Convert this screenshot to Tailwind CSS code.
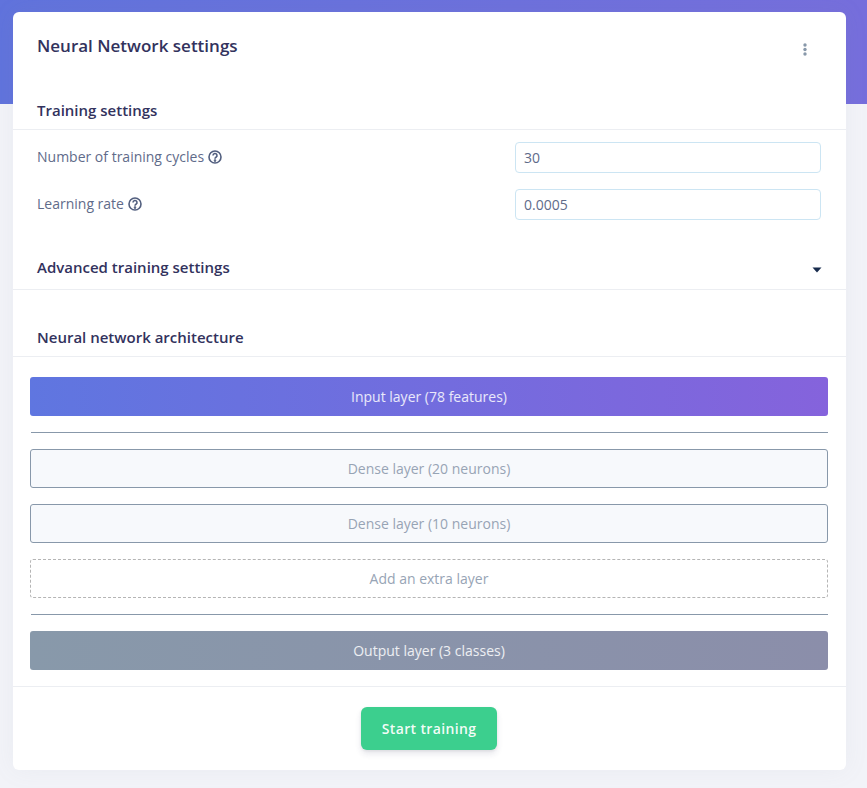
<!DOCTYPE html>
<html>
<head>
<meta charset="utf-8">
<script src="https://cdn.jsdelivr.net/npm/@tailwindcss/browser@4"></script>
</head>
<body class="bg-[#f2f3f8] font-['Open_Sans',sans-serif]">
<div class="relative h-[788px] w-[867px] overflow-hidden">
  <div class="absolute inset-x-0 top-0 h-[104px] bg-[linear-gradient(87deg,#6073dc_0%,#766edc_100%)]"></div>
  <main class="relative mx-[13px] mt-[12px] h-[758px] w-[833px] rounded-md bg-white shadow-[0_0_24px_rgba(136,152,170,0.08)]">
    <header class="flex h-[70px] items-start justify-between pl-[24px] pr-[39px] pt-[22px]">
      <h1 class="text-[17px] leading-[24px] font-semibold text-[#32325d]">Neural Network settings</h1>
      <svg class="mt-[9px]" width="4" height="13" viewBox="0 0 4 13" fill="#8898aa"><circle cx="2" cy="2" r="1.7"/><circle cx="2" cy="6.5" r="1.7"/><circle cx="2" cy="11" r="1.7"/></svg>
    </header>

    <section class="flex h-[48px] items-end border-b border-[#eceef2] pb-[9px] pl-[24px]">
      <h2 class="text-[15px] leading-[20px] font-semibold text-[#32325d]">Training settings</h2>
    </section>

    <div class="flex h-[59px] items-start pl-[24px] pr-[25px] pt-[12px]">
      <label class="flex h-[29px] flex-1 items-center gap-[4px] text-[14px] text-[#5f6b8a]">Number of training cycles
        <svg width="14" height="14" viewBox="0 0 14 14" fill="none" stroke="#525f7f" stroke-width="1.6"><circle cx="7" cy="7" r="6"/><path d="M5 5.5a2 2 0 1 1 3 1.7c-.7.4-1 .8-1 1.5"/><circle cx="7" cy="10.6" r=".5" fill="#525f7f"/></svg>
      </label>
      <input value="30" class="h-[31px] w-[306px] rounded-[4px] border border-[#cce5f3] bg-white px-[8px] text-[14px] text-[#5f6b8a]">
    </div>
    <div class="flex h-[47px] items-start pl-[24px] pr-[25px]">
      <label class="flex h-[29px] flex-1 items-center gap-[4px] text-[14px] text-[#5f6b8a]">Learning rate
        <svg width="14" height="14" viewBox="0 0 14 14" fill="none" stroke="#525f7f" stroke-width="1.6"><circle cx="7" cy="7" r="6"/><path d="M5 5.5a2 2 0 1 1 3 1.7c-.7.4-1 .8-1 1.5"/><circle cx="7" cy="10.6" r=".5" fill="#525f7f"/></svg>
      </label>
      <input value="0.0005" class="h-[31px] w-[306px] rounded-[4px] border border-[#cce5f3] bg-white px-[8px] text-[14px] text-[#5f6b8a]">
    </div>

    <section class="flex h-[54px] items-end justify-between border-b border-[#eceef2] pb-[12px] pl-[24px] pr-[24px]">
      <h2 class="text-[15px] leading-[20px] font-semibold text-[#32325d]">Advanced training settings</h2>
      <svg class="mb-[4px]" width="10" height="6" viewBox="0 0 10 6" fill="#172b4d"><path d="M0.5 0.5h9l-4.5 5z"/></svg>
    </section>

    <section class="flex h-[67px] items-end border-b border-[#eceef2] pb-[9px] pl-[24px]">
      <h2 class="text-[15px] leading-[20px] font-semibold text-[#32325d]">Neural network architecture</h2>
    </section>

    <div class="flex flex-col px-[17px] pt-[20px]">
      <div class="flex h-[39px] w-[798px] items-center justify-center rounded-[3px] bg-[linear-gradient(87deg,#5f76e0_0%,#8563dc_100%)] text-[14px] text-white/85">Input layer (78 features)</div>
      <hr class="mx-[1px] my-[16px] h-px border-0 bg-[#8898aa]">
      <div class="flex h-[39px] w-[798px] items-center justify-center rounded-[3px] border border-[#8898aa] bg-[#f7f9fc] text-[14px] text-[#97a4b5]">Dense layer (20 neurons)</div>
      <div class="mt-[16px] flex h-[39px] w-[798px] items-center justify-center rounded-[3px] border border-[#8898aa] bg-[#f7f9fc] text-[14px] text-[#97a4b5]">Dense layer (10 neurons)</div>
      <div class="mt-[16px] flex h-[39px] w-[798px] items-center justify-center rounded-[3px] border border-dashed border-[#b5b5b5] text-[14px] text-[#97a4b5]">Add an extra layer</div>
      <hr class="mx-[1px] my-[16px] h-px border-0 bg-[#8898aa]">
      <div class="flex h-[39px] w-[798px] items-center justify-center rounded-[3px] bg-[linear-gradient(87deg,#8899aa_0%,#8b8eaa_100%)] text-[14px] text-white/85">Output layer (3 classes)</div>
    </div>

    <footer class="mt-[16px] flex justify-center border-t border-[#eceef2] pt-[20px] pr-[1px]">
      <button class="h-[43px] w-[136px] rounded-[6px] bg-[#3ccf8e] text-[14px] font-semibold tracking-[0.35px] text-white/95 shadow-[0_4px_6px_rgba(50,50,93,0.11),0_1px_3px_rgba(0,0,0,0.08)]">Start training</button>
    </footer>
  </main>
</div>
</body>
</html>
